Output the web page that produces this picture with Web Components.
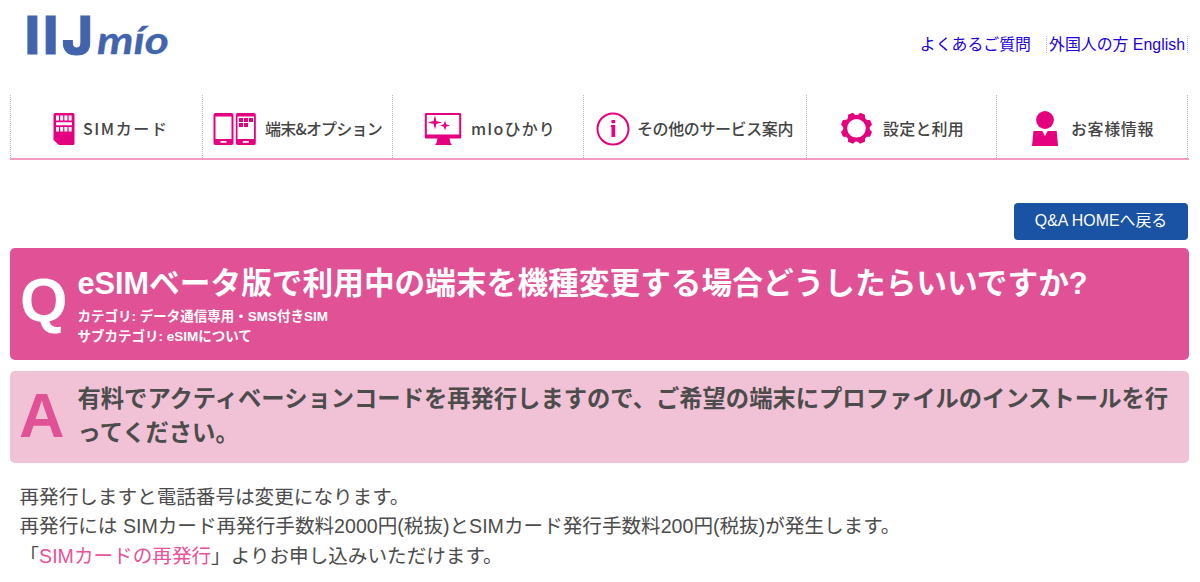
<!DOCTYPE html>
<html lang="ja">
<head>
<meta charset="utf-8">
<title>IIJmio Q&amp;A</title>
<style>
    body {
        margin: 0;
        background: #fff;
        color: #4c4c4c;
        font-family: "Liberation Sans", "Noto Sans CJK JP", sans-serif;
    }
</style>
</head>
<body>
<qa-page>
    <site-header slot="header">
        <header-link>よくあるご質問</header-link>
        <header-link divided>外国人の方 English</header-link>
    </site-header>
    <global-nav slot="nav">
        <nav-item icon="sim" style="--width: 192px; --start: 43px; --gap: 8px; --spacing: 1.6px">SIMカード</nav-item>
        <nav-item icon="devices" style="--width: 190px; --start: 11px; --gap: 8px; --spacing: -0.8px">端末&amp;オプション</nav-item>
        <nav-item icon="monitor" style="--width: 191px; --start: 32px; --gap: 9px; --spacing: 1.2px">mIoひかり</nav-item>
        <nav-item icon="info" style="--width: 223px; --start: 13px; --gap: 7px; --spacing: -0.4px">その他のサービス案内</nav-item>
        <nav-item icon="gear" style="--width: 190px; --start: 35px; --gap: 10px; --spacing: 0.2px">設定と利用</nav-item>
        <nav-item icon="person" style="--width: 192px; --start: 35px; --gap: 12px; --spacing: 0.6px">お客様情報</nav-item>
    </global-nav>
    <home-button slot="tools">Q&amp;A HOMEへ戻る</home-button>
    <question-panel>
        <span slot="title">eSIMベータ版で利用中の端末を機種変更する場合どうしたらいいですか?</span>
        <span slot="category">カテゴリ: データ通信専用・SMS付きSIM</span>
        <span slot="subcategory">サブカテゴリ: eSIMについて</span>
    </question-panel>
    <answer-panel>有料でアクティベーションコードを再発行しますので、ご希望の端末にプロファイルのインストールを行ってください。</answer-panel>
    <answer-body>
        <p>再発行しますと電話番号は変更になります。</p>
        <p>再発行には SIMカード再発行手数料2000円(税抜)とSIMカード発行手数料200円(税抜)が発生します。</p>
        <p>「<a>SIMカードの再発行</a>」よりお申し込みいただけます。</p>
    </answer-body>
</qa-page>

<script>
const ICONS = {
    sim: `<svg width="22" height="34" viewBox="0 0 22 34">
        <path fill="#e4007f" d="M2 1h18q1.500 0 1.500 1.500v29q0 1.500-1.500 1.500H6L.5 28V2.500Q.5 1 2 1z"/>
        <path fill="#fff" d="M3 3.500h3v5H3zM7.200 3.500h3v5h-3zM11.400 3.500h3v5h-3zM15.600 3.500h3v5h-3zM3 10.200h16v3H3zM3 15h3v4.500H3zM7.200 15h3v4.500h-3zM11.400 15h3v4.500h-3zM15.600 15h3v4.500h-3z"/>
    </svg>`,
    devices: `<svg width="44" height="34" viewBox="0 0 44 34">
        <rect x=".5" y="1" width="20" height="32" rx="2" fill="#e4007f"/>
        <rect x="2.500" y="4.500" width="16" height="22.500" fill="#fff"/>
        <rect x="7.500" y="29" width="6" height="1.800" fill="#fff"/>
        <rect x="22.800" y="1" width="20" height="32" rx="2" fill="#e4007f"/>
        <rect x="24.500" y="4.500" width="16.500" height="22.500" fill="#fff"/>
        <rect x="29.800" y="29" width="6" height="1.800" fill="#fff"/>
        <path fill="#e4007f" d="M26 6h4v4h-4zM31 6h4v4h-4zM36 6h4v4h-4zM26 11h4v4h-4zM31 11h4v4h-4z"/>
    </svg>`,
    monitor: `<svg width="38" height="34" viewBox="0 0 38 34">
        <path fill="#e4007f" fill-rule="evenodd" d="M2 1h34q1.200 0 1.200 1.200v23q0 1.300-1.200 1.300H25.500l1 4.500 1.500 2H11l1.500-2 1-4.500H2q-1.200 0-1.200-1.300v-23Q.8 1 2 1zM2.800 3v19.500h32.400V3z"/>
        <path fill="#e4007f" d="M11 3.500l1.400 5.600L18 10.500 12.400 11.900 11 17.500 9.600 11.900 4 10.500 9.600 9.100zM21 8.500l1.200 3.800 3.800 1.200-3.800 1.200-1.200 3.900-1.200-3.900-3.800-1.200 3.800-1.200z"/>
    </svg>`,
    info: `<svg width="34" height="34" viewBox="0 0 34 34">
        <circle cx="17" cy="17" r="15.500" fill="#fff" stroke="#e4007f" stroke-width="2"/>
        <path fill="#e4007f" d="M15.500 8h3.700v3.200h-3.700zM14.800 13h4.400v12h-3.700V15h-.7z"/>
    </svg>`,
    gear: `<svg width="32" height="34" viewBox="0 0 32 34">
        <g fill="#e4007f" transform="translate(15.500 16.300)">
            <circle r="13.200"/>
            <path id="tooth" d="M-2.600-15.700h5.200l1.900 4.200h-9z" transform="rotate(22.500)"/>
            <use href="#tooth" transform="rotate(45)"/>
            <use href="#tooth" transform="rotate(90)"/>
            <use href="#tooth" transform="rotate(135)"/>
            <use href="#tooth" transform="rotate(180)"/>
            <use href="#tooth" transform="rotate(225)"/>
            <use href="#tooth" transform="rotate(270)"/>
            <use href="#tooth" transform="rotate(315)"/>
        </g>
        <circle cx="15.500" cy="16.300" r="9.300" fill="#fff"/>
    </svg>`,
    person: `<svg width="28" height="36" viewBox="0 0 28 36">
        <circle cx="14" cy="9" r="8.900" fill="#e4007f"/>
        <path fill="#e4007f" d="M2.500 20h8.800l2.700 5 2.700-5h9L27 35H1z"/>
    </svg>`
};

class BaseElement extends HTMLElement {
    constructor() {
        super();
        this.attachShadow({ mode: 'open' });
        this.shadowRoot.innerHTML = this.render();
    }
}

// Page column, 10px side margins
class QaPage extends BaseElement {
    render() {
        return `
      <style>
        :host { display: block; box-sizing: border-box; height: 582px; padding: 0 11px 0 10px; overflow: hidden; }
        .tools { display: flex; justify-content: flex-end; padding: 43px 1px 8.500px 0; }
      </style>
      <slot name="header"></slot>
      <slot name="nav"></slot>
      <div class="tools"><slot name="tools"></slot></div>
      <slot></slot>
    `;
    }
}

class SiteHeader extends BaseElement {
    render() {
        return `
      <style>
        :host { display: flex; justify-content: space-between; height: 94.500px; }
        svg { display: block; }
        text { fill: #4164ad; stroke: #4164ad; font-weight: bold; }
        .iij { font-family: Inter, sans-serif; font-size: 52px; font-weight: 800; }
        .mio { font-family: Lato, sans-serif; font-style: italic; }
        nav { display: flex; align-items: flex-start; gap: 15px; padding: 36px 1px 0 0; }
      </style>
      <svg width="180" height="70" viewBox="10 0 180 70">
        <text class="iij" x="25 43.300 62" y="54" stroke-width="1">IIJ</text>
        <text class="mio" x="97" y="54" font-size="39" stroke-width=".3" textLength="72" lengthAdjust="spacingAndGlyphs">mío</text>
      </svg>
      <nav><slot></slot></nav>
    `;
    }
}

class HeaderLink extends BaseElement {
    render() {
        return `
      <style>
        :host { display: block; color: #2200e0; font-size: 15.900px; line-height: 17px; white-space: nowrap; }
        :host([divided]) { padding: 0 2px; border: dotted #bbb; border-width: 0 1px; }
      </style>
      <slot></slot>
    `;
    }
}

class GlobalNav extends BaseElement {
    render() {
        return `
      <style>
        :host { display: flex; box-sizing: border-box; height: 65px; border-bottom: 2px solid #f49ac1; }
      </style>
      <slot></slot>
    `;
    }
}

class NavItem extends BaseElement {
    render() {
        return `
      <style>
        :host {
          display: flex; align-items: center; box-sizing: border-box; flex: 0 1 var(--width);
          gap: var(--gap); padding: 5px 0 0 calc(var(--start) - 1px);
          border-left: 1px dotted #bbb; color: #444; font: 500 16px/24px "Noto Sans CJK JP", sans-serif;
          letter-spacing: var(--spacing); white-space: nowrap;
        }
        :host(:last-child) { border-right: 1px dotted #bbb; }
        svg { display: block; flex: none; }
        span { padding-bottom: 2px; }
      </style>
      ${ICONS[this.getAttribute('icon')]}
      <span><slot></slot></span>
    `;
    }
}

class HomeButton extends BaseElement {
    render() {
        return `
      <style>
        :host {
          display: block; box-sizing: border-box; width: 174px; height: 37px; border-radius: 4px;
          background: #1a53a4; color: #fff; font-size: 15.900px; line-height: 35px; text-align: center;
        }
      </style>
      <slot></slot>
    `;
    }
}

class QuestionPanel extends BaseElement {
    render() {
        return `
      <style>
        :host {
          display: flex; box-sizing: border-box; height: 111.500px; border-radius: 5px;
          background: #e15195; color: #fff; font-weight: bold; white-space: nowrap;
        }
        .mark { width: 67.500px; padding-left: 10px; box-sizing: border-box; font-size: 61px; line-height: 104px; }
        .title { font-size: 30.700px; line-height: 40px; padding-top: 15.500px; }
        .meta { font-size: 13.500px; line-height: 20px; }
        .first { padding-top: 3px; }
      </style>
      <div class="mark">Q</div>
      <div>
        <div class="title"><slot name="title"></slot></div>
        <div class="meta first"><slot name="category"></slot></div>
        <div class="meta"><slot name="subcategory"></slot></div>
      </div>
    `;
    }
}

class AnswerPanel extends BaseElement {
    render() {
        return `
      <style>
        :host {
          display: flex; box-sizing: border-box; height: 92px; margin-top: 11px; border-radius: 5px;
          background: #f1c1d6; font-weight: bold;
        }
        .mark { flex: none; width: 67.500px; padding-left: 9px; box-sizing: border-box; color: #e15195; font-size: 63px; line-height: 89px; }
        .text { flex: none; width: 1105px; font-size: 23.300px; line-height: 34.500px; padding-top: 11px; }
      </style>
      <div class="mark">A</div>
      <div class="text"><slot></slot></div>
    `;
    }
}

class AnswerBody extends BaseElement {
    render() {
        return `
      <style>
        :host { display: block; padding: 20px 9.500px 0; font-size: 19.600px; line-height: 29.700px; white-space: nowrap; }
        ::slotted(p) { margin: 0; }
      </style>
      <slot></slot>
    `;
    }

    connectedCallback() {
        // Slotted links sit two levels deep, ::slotted can't reach them
        this.querySelectorAll('a').forEach(link => {
            link.style.color = '#e85298';
        });
    }
}

customElements.define('qa-page', QaPage);
customElements.define('site-header', SiteHeader);
customElements.define('header-link', HeaderLink);
customElements.define('global-nav', GlobalNav);
customElements.define('nav-item', NavItem);
customElements.define('home-button', HomeButton);
customElements.define('question-panel', QuestionPanel);
customElements.define('answer-panel', AnswerPanel);
customElements.define('answer-body', AnswerBody);
</script>
</body>
</html>
